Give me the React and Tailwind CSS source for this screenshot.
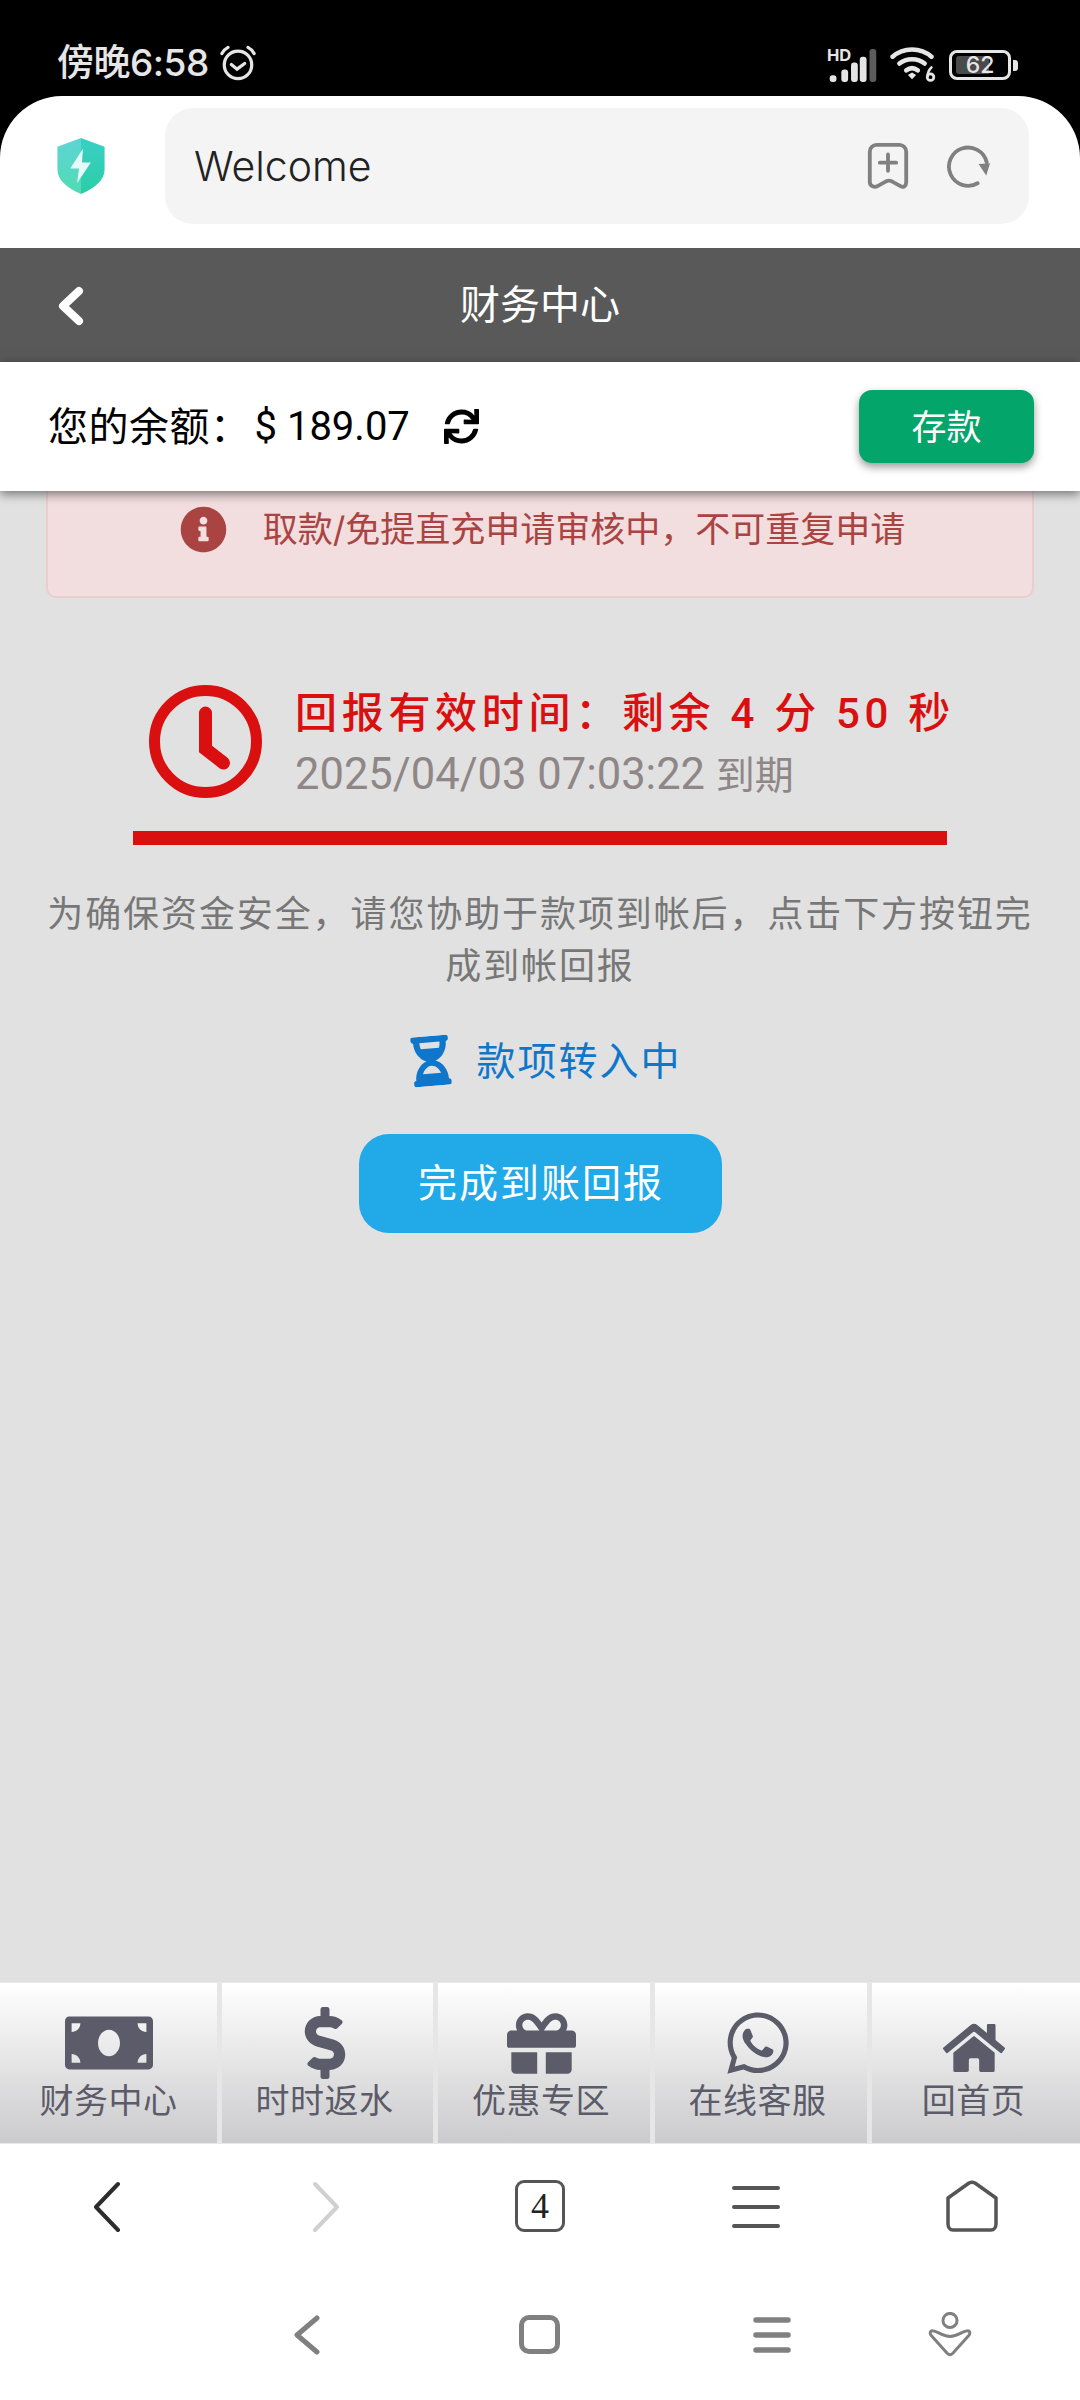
import React from 'react';
import { FaMoneyBill, FaDollarSign, FaGift, FaWhatsapp, FaHome, FaInfoCircle, FaSync, FaHourglassHalf } from 'react-icons/fa';

const tabs = [
  { label: '财务中心', icon: <FaMoneyBill size={88} />, box: 'h-[72px]', cell: '' },
  { label: '时时返水', icon: <FaDollarSign size={72} />, box: 'h-[72px]', cell: 'pr-[6px]' },
  { label: '优惠专区', icon: <FaGift size={69} />, box: 'h-[72px]', cell: 'pr-[6px]' },
  { label: '在线客服', icon: <FaWhatsapp size={70} />, box: 'h-[72px]', cell: 'pr-[7px]' },
  { label: '回首页', icon: <FaHome size={62} />, box: 'h-[72px] pt-[9px]', cell: 'pr-[5px]' },
];

const StatusBar = () => (
  <div className="h-[96px] bg-black flex items-start justify-between pl-[57px] pr-[62px] pt-[44px]">
    <div className="flex items-center gap-[9px]">
      <span className="text-[37px] leading-[38px] font-medium text-[#e6e6e6] tracking-[-0.5px]">傍晚6:58</span>
      <svg width="40" height="36" viewBox="0 0 40 38" fill="none" stroke="#e6e6e6" strokeWidth="3.4" strokeLinecap="round">
        <circle cx="20" cy="21" r="14.5" />
        <path d="M13 20.5l6 5 8-6" />
        <path d="M3 9c1.5-3 3.5-5 6.5-6.5M37 9c-1.500-3-3.500-5-6.500-6.500" />
      </svg>
    </div>
    <div className="flex items-center gap-[13px] mt-[3px]">
      <div className="relative w-[50px] h-[33px]">
        <span className="absolute left-0 top-[-1px] text-[16.5px] leading-[15px] font-bold text-[#e6e6e6]">HD</span>
        <svg className="absolute left-0 top-0" width="50" height="33" viewBox="0 0 50 34" fill="#e6e6e6">
          <rect x="2" y="27" width="7" height="7" rx="3" />
          <rect x="14" y="21" width="7" height="13" rx="3" />
          <rect x="24" y="14" width="7" height="20" rx="3" />
          <rect x="33" y="8" width="7" height="26" rx="3" />
          <rect x="43" y="0" width="7" height="34" rx="3" fill="#5c5c5c" />
        </svg>
      </div>
      <svg width="46" height="36" viewBox="0 0 46 37" fill="none" stroke="#e6e6e6" strokeWidth="4.6" strokeLinecap="round">
        <path d="M2 10c11-10 29-10 40 0" />
        <path d="M9 17c7-6 19-6 26 0" />
        <path d="M16 24c4-3 8-3 12 0" />
        <path d="M19 29l3-2 3 2-3 3z" fill="#e6e6e6" strokeWidth="1.5" />
        <circle cx="41" cy="31" r="3.4" strokeWidth="2.8" />
        <path d="M42 21c-2 2-4 5-4 9" strokeWidth="2.6" />
      </svg>
      <div className="flex items-center gap-[2px]">
        <div className="relative w-[62px] h-[30px] rounded-[8px] border-[3px] border-[#e6e6e6] overflow-hidden flex items-center justify-center">
          <div className="absolute left-[4px] top-[3px] bottom-[3px] w-[33px] rounded-l-[3px] bg-[#4a4a4a]" />
          <span className="relative text-[23px] leading-[24px] text-[#e6e6e6] font-medium">62</span>
        </div>
        <div className="w-[5px] h-[11px] rounded-r-[3px] bg-[#e6e6e6]" />
      </div>
    </div>
  </div>
);

const BrowserBar = () => (
  <div className="bg-black">
    <div className="h-[152px] bg-white rounded-t-[62px] flex items-start pt-[12px] pl-[57px] pr-[51px]">
      <svg className="mt-[30px] shrink-0" width="48" height="56" viewBox="0 0 48 57">
        <defs>
          <linearGradient id="shieldL" x1="0" y1="0" x2="0" y2="1">
            <stop offset="0" stopColor="#5fd4d4" />
            <stop offset="1" stopColor="#4fdcb4" />
          </linearGradient>
          <linearGradient id="shieldR" x1="0" y1="0" x2="0" y2="1">
            <stop offset="0" stopColor="#38d0c6" />
            <stop offset="1" stopColor="#2ccda6" />
          </linearGradient>
        </defs>
        <path d="M24 0L0 9v23c0 11 10 19 24 25z" fill="url(#shieldL)" />
        <path d="M24 0l24 9v23c0 11-10 19-24 25z" fill="url(#shieldR)" />
        <path d="M26 11L13 31h9l-2 15 14-21h-9z" fill="#e6faf7" />
      </svg>
      <div className="ml-[60px] flex-1 h-[116px] rounded-[28px] bg-[#f4f4f4] flex items-center pl-[29px] pr-[38px]">
        <span className="flex-1 text-[41px] leading-[48px] text-[#222] font-light">Welcome</span>
        <svg width="42" height="46" viewBox="0 0 42 48" fill="none" stroke="#808080" strokeWidth="4" strokeLinecap="round" strokeLinejoin="round">
          <path d="M2 9a7 7 0 0 1 7-7h24a7 7 0 0 1 7 7v32c0 4-3 6-6 4l-9-5c-2-1-4-1-6 0l-9 5c-3 2-8 0-8-4z" />
          <path d="M21 12v17M12.500 20.500h17" />
        </svg>
        <svg className="ml-[38px]" width="44" height="43" viewBox="0 0 44 45" fill="none">
          <path d="M31 40a20 20 0 1 1 9.500-22" stroke="#808080" strokeWidth="4" strokeLinecap="round" />
          <path d="M32 20l12-1-4 13z" fill="#808080" />
        </svg>
      </div>
    </div>
  </div>
);

const PageHeader = () => (
  <div className="relative h-[114px] bg-[#595959] flex items-center justify-center">
    <svg className="absolute left-[58px] top-[38px]" width="26" height="40" viewBox="0 0 26 40" fill="none" stroke="#fff" strokeWidth="8" strokeLinecap="round" strokeLinejoin="round">
      <path d="M21 5L5 20l16 15" />
    </svg>
    <span className="text-[40px] leading-[48px] text-white">财务中心</span>
  </div>
);

const BalanceBar = () => (
  <div className="relative z-10 h-[129px] bg-white shadow-[0_3px_10px_rgba(0,0,0,0.5)] flex items-center pl-[48px] pr-[46px]">
    <span className="text-[40px] leading-[48px] text-black tracking-[0.5px]">您的余额：</span>
    <span className="ml-[4px] text-[40px] leading-[48px] text-black font-['Roboto',sans-serif]">$ 189.07</span>
    <FaSync size={35} className="ml-[34px] text-black" />
    <button className="ml-auto w-[175px] h-[73px] rounded-[13px] bg-[#04a56a] shadow-[0_4px_9px_rgba(0,0,0,0.4)] text-[35px] leading-[40px] text-white">存款</button>
  </div>
);

const Alert = () => (
  <div className="mt-[-33px] h-[140px] pl-[5px] pt-[2px] rounded-[10px] border-[2px] border-[#ebccd1] bg-[#f2dddf] flex items-center justify-center text-[#a94442]">
    <FaInfoCircle size={47} />
    <span className="ml-[36px] text-[35px] leading-[44px]">取款/免提直充申请审核中，不可重复申请</span>
  </div>
);

const Countdown = () => (
  <div className="mx-[87px] mt-[87px]">
    <div className="flex items-start pl-[16px]">
      <svg width="113" height="113" viewBox="0 0 113 113" fill="none" stroke="#d9100f" className="shrink-0">
        <circle cx="56.500" cy="56.500" r="51" strokeWidth="11" />
        <path d="M56.500 28v36l18 14" strokeWidth="13" strokeLinecap="round" strokeLinejoin="miter" />
      </svg>
      <div className="ml-[33px] pt-[3px] h-[113px]">
        <div className="text-[42px] leading-[52px] font-medium text-[#d9100f] tracking-[4.7px] whitespace-nowrap font-['Roboto','Noto_Sans_CJK_SC',sans-serif]">回报有效时间：剩余 4 分 50 秒</div>
        <div className="mt-[7px] h-[50px] text-[43.5px] leading-[50px] text-[#8f8787] whitespace-nowrap font-['Roboto',sans-serif]">
          2025/04/03 07:03:22 <span className="text-[39px] font-['Noto_Sans_CJK_SC',sans-serif]">到期</span>
        </div>
      </div>
    </div>
    <div className="mt-[33px] h-[14px] bg-[#d9100f]" />
  </div>
);

const BottomTabs = () => (
  <div className="h-[162px] border-t border-[#e8e8e8] border-b grid grid-cols-[217px_211px_212px_212px_1fr] gap-[5px] bg-[#e6e6e6]">
    {tabs.map((tab) => (
      <div key={tab.label} className={`${tab.cell} flex flex-col items-center bg-gradient-to-b from-white to-[#cbcbcd] text-[#5b5b69]`}>
        <div className={`${tab.box} mt-[24px] flex items-center justify-center`}>{tab.icon}</div>
        <span className="text-[34px] leading-[44px] tracking-[0.5px]">{tab.label}</span>
      </div>
    ))}
  </div>
);

const BrowserNav = () => (
  <div className="h-[126px] bg-white grid grid-cols-5 pt-[36px]">
    <div className="flex justify-center pr-[3px]">
      <svg width="28" height="52" viewBox="0 0 28 52" fill="none" stroke="#2c2c2c" strokeWidth="4" strokeLinecap="round" strokeLinejoin="round">
        <path d="M25 4L3 27l22 23" />
      </svg>
    </div>
    <div className="flex justify-center pl-[4px]">
      <svg width="28" height="52" viewBox="0 0 28 52" fill="none" stroke="#d0d0d0" strokeWidth="4" strokeLinecap="round" strokeLinejoin="round">
        <path d="M3 4l22 23L3 50" />
      </svg>
    </div>
    <div className="flex justify-center">
      <div className="w-[50px] h-[52px] rounded-[9px] border-[3px] border-[#555] flex items-center justify-center text-[36px] leading-[40px] text-[#222] font-['Liberation_Serif',serif]">4</div>
    </div>
    <div className="flex justify-center">
      <svg width="48" height="52" viewBox="0 0 48 52" fill="none" stroke="#555" strokeWidth="4" strokeLinecap="round">
        <path d="M2 8h44M2 27h44M2 46h44" />
      </svg>
    </div>
    <div className="flex justify-center">
      <svg width="52" height="52" viewBox="0 0 52 52" fill="none" stroke="#555" strokeWidth="3.500" strokeLinejoin="round">
        <path d="M2 18L23 3c2-1 4-1 6 0l21 15v26c0 3-2 6-5 6H7c-3 0-5-3-5-6z" />
      </svg>
    </div>
  </div>
);

const SystemNav = () => (
  <div className="h-[130px] bg-white flex items-start pt-[45px] pl-[294px]">
    <svg width="26" height="40" viewBox="0 0 26 40" fill="none" stroke="#808080" strokeWidth="5" strokeLinecap="round" strokeLinejoin="round">
      <path d="M23 3L3 20l20 17" />
    </svg>
    <div className="ml-[199px] w-[41px] h-[39px] rounded-[10px] border-[5px] border-[#808080]" />
    <svg className="ml-[193px] mt-[2px]" width="38" height="36" viewBox="0 0 38 36" fill="none" stroke="#808080" strokeWidth="5.500" strokeLinecap="round">
      <path d="M3 3h32M3 18h32M3 33h32" />
    </svg>
    <svg className="ml-[137px] mt-[-3px]" width="44" height="45" viewBox="0 0 44 48" fill="none" stroke="#808080" strokeWidth="3.200" strokeLinecap="round" strokeLinejoin="round">
      <circle cx="22" cy="9" r="7.500" />
      <path d="M3 20c6 0 10 6 19 6s13-6 19-6c2 0 3 3 1 5L25 44c-2 2-4 2-6 0L2 25c-2-2-1-5 1-5z" />
    </svg>
  </div>
);

export default function App() {
  return (
    <div className="w-[1080px] h-[2400px] flex flex-col overflow-hidden bg-[#e1e1e1] font-['Inter','Noto_Sans_CJK_SC',sans-serif]">
      <StatusBar />
      <BrowserBar />
      <PageHeader />
      <BalanceBar />
      <main className="flex-1 px-[46px]">
        <Alert />
        <Countdown />
        <p className="mt-[43px] text-center text-[36px] leading-[52px] tracking-[1.9px] text-[#777]">
          为确保资金安全，请您协助于款项到帐后，点击下方按钮完成到帐回报
        </p>
        <div className="mt-[42px] pl-[8px] flex items-center justify-center h-[54px] text-[#0f77cb]">
          <FaHourglassHalf size={50} className="rotate-[-5deg]" />
          <span className="ml-[20px] text-[39px] leading-[48px] tracking-[2px]">款项转入中</span>
        </div>
        <div className="mt-[46px] flex justify-center">
          <button className="w-[363px] h-[99px] pl-[2px] pb-[2px] rounded-[30px] bg-[#22a9e8] text-[39px] leading-[48px] tracking-[2px] text-white">完成到账回报</button>
        </div>
      </main>
      <BottomTabs />
      <BrowserNav />
      <SystemNav />
    </div>
  );
}
